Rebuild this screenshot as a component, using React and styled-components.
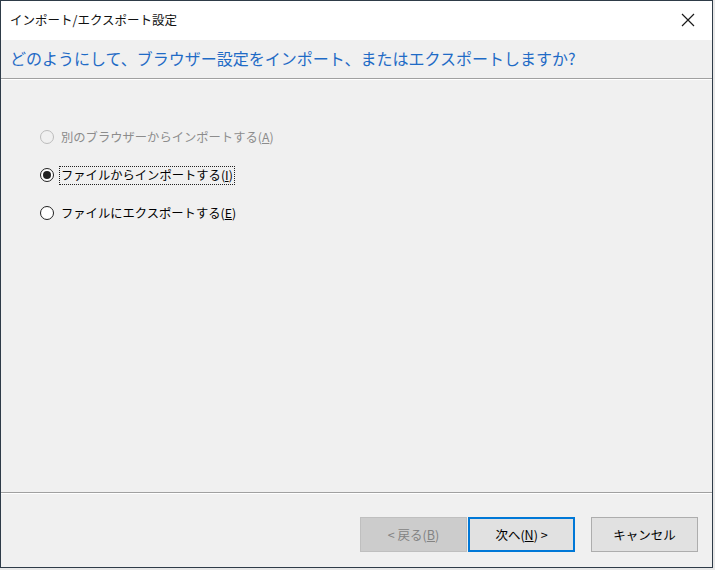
import React, { useState } from "react";
import styled, { createGlobalStyle } from "styled-components";

const GlobalStyle = createGlobalStyle`
  html, body {
    margin: 0;
    padding: 0;
    background: #e8e8e8;
  }
  body {
    font-family: "Noto Sans CJK JP", "Noto Sans", sans-serif;
  }
`;

const options = [
  { id: "browser", label: "別のブラウザーからインポートする", key: "A", disabled: true },
  { id: "import", label: "ファイルからインポートする", key: "I" },
  { id: "export", label: "ファイルにエクスポートする", key: "E" },
];

export default function App() {
  const [choice, setChoice] = useState("import");

  return (
    <>
      <GlobalStyle />
      <Window>
        <TitleBar>
          <Title>インポート/エクスポート設定</Title>
          <CloseButton title="閉じる">
            <svg width="14" height="14" viewBox="0 0 14 14">
              <path d="M1 1 L13 13 M13 1 L1 13" stroke="#1a1a1a" strokeWidth="1.2" fill="none" />
            </svg>
          </CloseButton>
        </TitleBar>
        <Header>どのようにして、ブラウザー設定をインポート、またはエクスポートしますか?</Header>
        <Separator />
        <Body>
          {options.map((o) => (
            <RadioRow key={o.id} $disabled={o.disabled} onClick={() => !o.disabled && setChoice(o.id)}>
              <RadioCircle $disabled={o.disabled} $checked={choice === o.id} />
              <RadioLabel $focused={choice === o.id}>
                {o.label}(<u>{o.key}</u>)
              </RadioLabel>
            </RadioRow>
          ))}
        </Body>
        <Separator />
        <Footer>
          <Button disabled>
            &lt; 戻る(<u>B</u>)
          </Button>
          <Button $primary>
            次へ(<u>N</u>) &gt;
          </Button>
          <Button $spaced>キャンセル</Button>
        </Footer>
      </Window>
    </>
  );
}

const Window = styled.div`
  width: 711px;
  height: 566px;
  border: 1px solid #2e3b48;
  background: #f0f0f0;
  display: flex;
  flex-direction: column;
  overflow: hidden;
`;

const TitleBar = styled.div`
  height: 37px;
  flex-shrink: 0;
  background: #ffffff;
  display: flex;
  align-items: center;
  justify-content: space-between;
  padding: 0 14px 2px 9px;
`;

const Title = styled.div`
  font-size: 12.5px;
  color: #111;
`;

const CloseButton = styled.div`
  display: flex;
  align-items: center;
  justify-content: center;
  width: 20px;
  height: 20px;
`;

const Header = styled.div`
  height: 38px;
  flex-shrink: 0;
  display: flex;
  align-items: center;
  padding-left: 9px;
  padding-bottom: 2px;
  box-sizing: border-box;
  font-size: 16px;
  color: #1f6bc6;
  white-space: nowrap;
`;

const Separator = styled.div`
  height: 1px;
  flex-shrink: 0;
  background: #a0a0a0;
  border-bottom: 1px solid #ffffff;
`;

const Body = styled.div`
  flex: 1;
  display: flex;
  flex-direction: column;
  gap: 18px;
  padding: 47px 0 0 39px;
`;

const RadioRow = styled.div`
  display: flex;
  align-items: center;
  height: 20px;
  gap: 7px;
  color: ${(p) => (p.$disabled ? "#8c8c8c" : "#000")};
  cursor: default;
`;

const RadioCircle = styled.span`
  box-sizing: border-box;
  width: 14px;
  height: 14px;
  border-radius: 50%;
  border: 1px solid ${(p) => (p.$disabled ? "#bcbcbc" : "#222")};
  background: ${(p) => (p.$disabled ? "#f0f0f0" : "#fff")};
  display: flex;
  align-items: center;
  justify-content: center;
  flex-shrink: 0;
  &::after {
    content: "";
    width: 8px;
    height: 8px;
    border-radius: 50%;
    background: #222;
    display: ${(p) => (p.$checked ? "block" : "none")};
  }
`;

const RadioLabel = styled.span`
  font-size: 12.3px;
  line-height: 17px;
  padding: 0 1px;
  border: 1px ${(p) => (p.$focused ? "dotted #222" : "solid transparent")};
  margin-left: -2px;
  white-space: nowrap;
`;

const Footer = styled.div`
  height: 73px;
  flex-shrink: 0;
  display: flex;
  justify-content: flex-end;
  align-items: flex-start;
  padding: 23px 14px 0 0;
  box-sizing: border-box;
  gap: 1px;
`;

const Button = styled.button`
  width: 107px;
  height: 35px;
  box-sizing: border-box;
  font-family: "Noto Sans CJK JP", "Noto Sans", sans-serif;
  font-size: 12.5px;
  color: #000;
  background: #e1e1e1;
  border: 1px solid ${(p) => (p.$primary ? "#0078d7" : "#adadad")};
  box-shadow: ${(p) => (p.$primary ? "inset 0 0 0 1px #0078d7" : "none")};
  margin-left: ${(p) => (p.$spaced ? "15px" : "0")};
  &:disabled {
    background: #cccccc;
    border-color: #bfbfbf;
    color: #838383;
  }
`;
